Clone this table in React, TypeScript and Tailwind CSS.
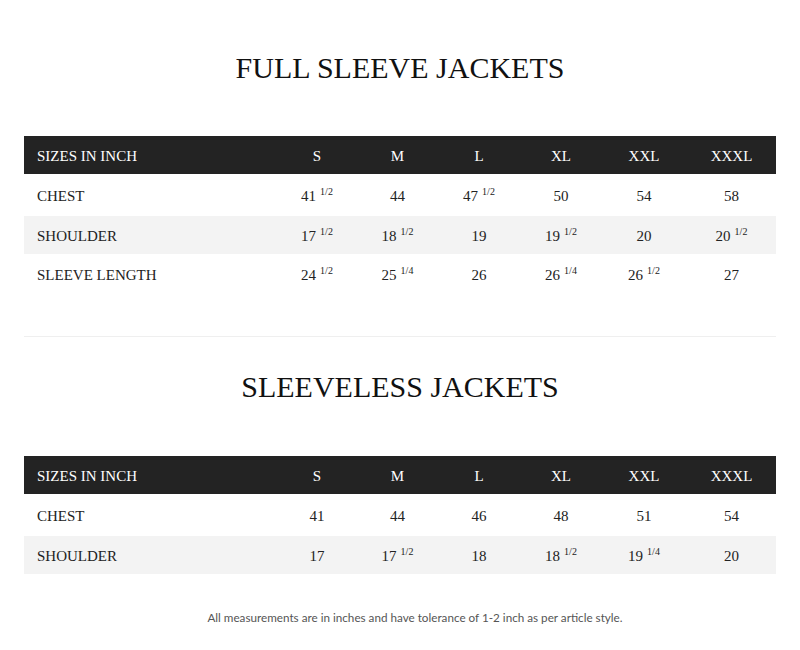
import React from "react";

type Cell = { n: string; f?: string };

const cols = "grid grid-cols-[253px_80px_81px_82px_82px_84px_91px]";

function Val({ c }: { c: Cell }) {
  return (
    <div className="flex items-center justify-center">
      <span>
        {c.n}
        {c.f && (
          <sup className="text-[10px] ml-[4px] relative top-[-6px]">{c.f}</sup>
        )}
      </span>
    </div>
  );
}

function Row({
  label,
  vals,
  gray,
  h,
}: {
  label: string;
  vals: Cell[];
  gray?: boolean;
  h: string;
}) {
  return (
    <div className={`${cols} ${h} ${gray ? "bg-[#f3f3f3]" : "bg-white"} text-[#222] pt-[2px]`}>
      <div className="flex items-center pl-[13px]">{label}</div>
      {vals.map((v, i) => (
        <Val key={i} c={v} />
      ))}
    </div>
  );
}

function Header() {
  const sizes = ["S", "M", "L", "XL", "XXL", "XXXL"];
  return (
    <div className={`${cols} h-[38px] bg-[#232323] text-white pt-[3px]`}>
      <div className="flex items-center pl-[13px]">SIZES IN INCH</div>
      {sizes.map((s) => (
        <div key={s} className="flex items-center justify-center">
          {s}
        </div>
      ))}
    </div>
  );
}

const c = (n: string, f?: string): Cell => ({ n, f });

export default function App() {
  return (
    <div
      className="w-[800px] h-[650px] bg-white px-[24px] pt-[53px] flex flex-col text-[15px]"
      style={{ fontFamily: '"Liberation Serif", "Times New Roman", serif' }}
    >
      <h1 className="text-[30px] leading-[30px] text-center text-[#111]">
        FULL SLEEVE JACKETS
      </h1>
      <div className="mt-[53px] flex flex-col">
        <Header />
        <Row
          h="h-[42px]"
          label="CHEST"
          vals={[c("41", "1/2"), c("44"), c("47", "1/2"), c("50"), c("54"), c("58")]}
        />
        <Row
          h="h-[38px]"
          gray
          label="SHOULDER"
          vals={[c("17", "1/2"), c("18", "1/2"), c("19"), c("19", "1/2"), c("20"), c("20", "1/2")]}
        />
        <Row
          h="h-[40px]"
          label="SLEEVE LENGTH"
          vals={[c("24", "1/2"), c("25", "1/4"), c("26"), c("26", "1/4"), c("26", "1/2"), c("27")]}
        />
      </div>
      <div className="mt-[42px] h-px bg-[#efefef]" />
      <h1 className="mt-[35px] text-[30px] leading-[30px] text-center text-[#111]">
        SLEEVELESS JACKETS
      </h1>
      <div className="mt-[54px] flex flex-col">
        <Header />
        <Row
          h="h-[42px]"
          label="CHEST"
          vals={[c("41"), c("44"), c("46"), c("48"), c("51"), c("54")]}
        />
        <Row
          h="h-[38px]"
          gray
          label="SHOULDER"
          vals={[c("17"), c("17", "1/2"), c("18"), c("18", "1/2"), c("19", "1/4"), c("20")]}
        />
      </div>
      <p
        className="mt-[35px] pl-[30px] text-center text-[11.7px] leading-[16px] text-[#555]"
        style={{ fontFamily: "Lato, sans-serif" }}
      >
        All measurements are in inches and have tolerance of 1-2 inch as per article style.
      </p>
    </div>
  );
}
